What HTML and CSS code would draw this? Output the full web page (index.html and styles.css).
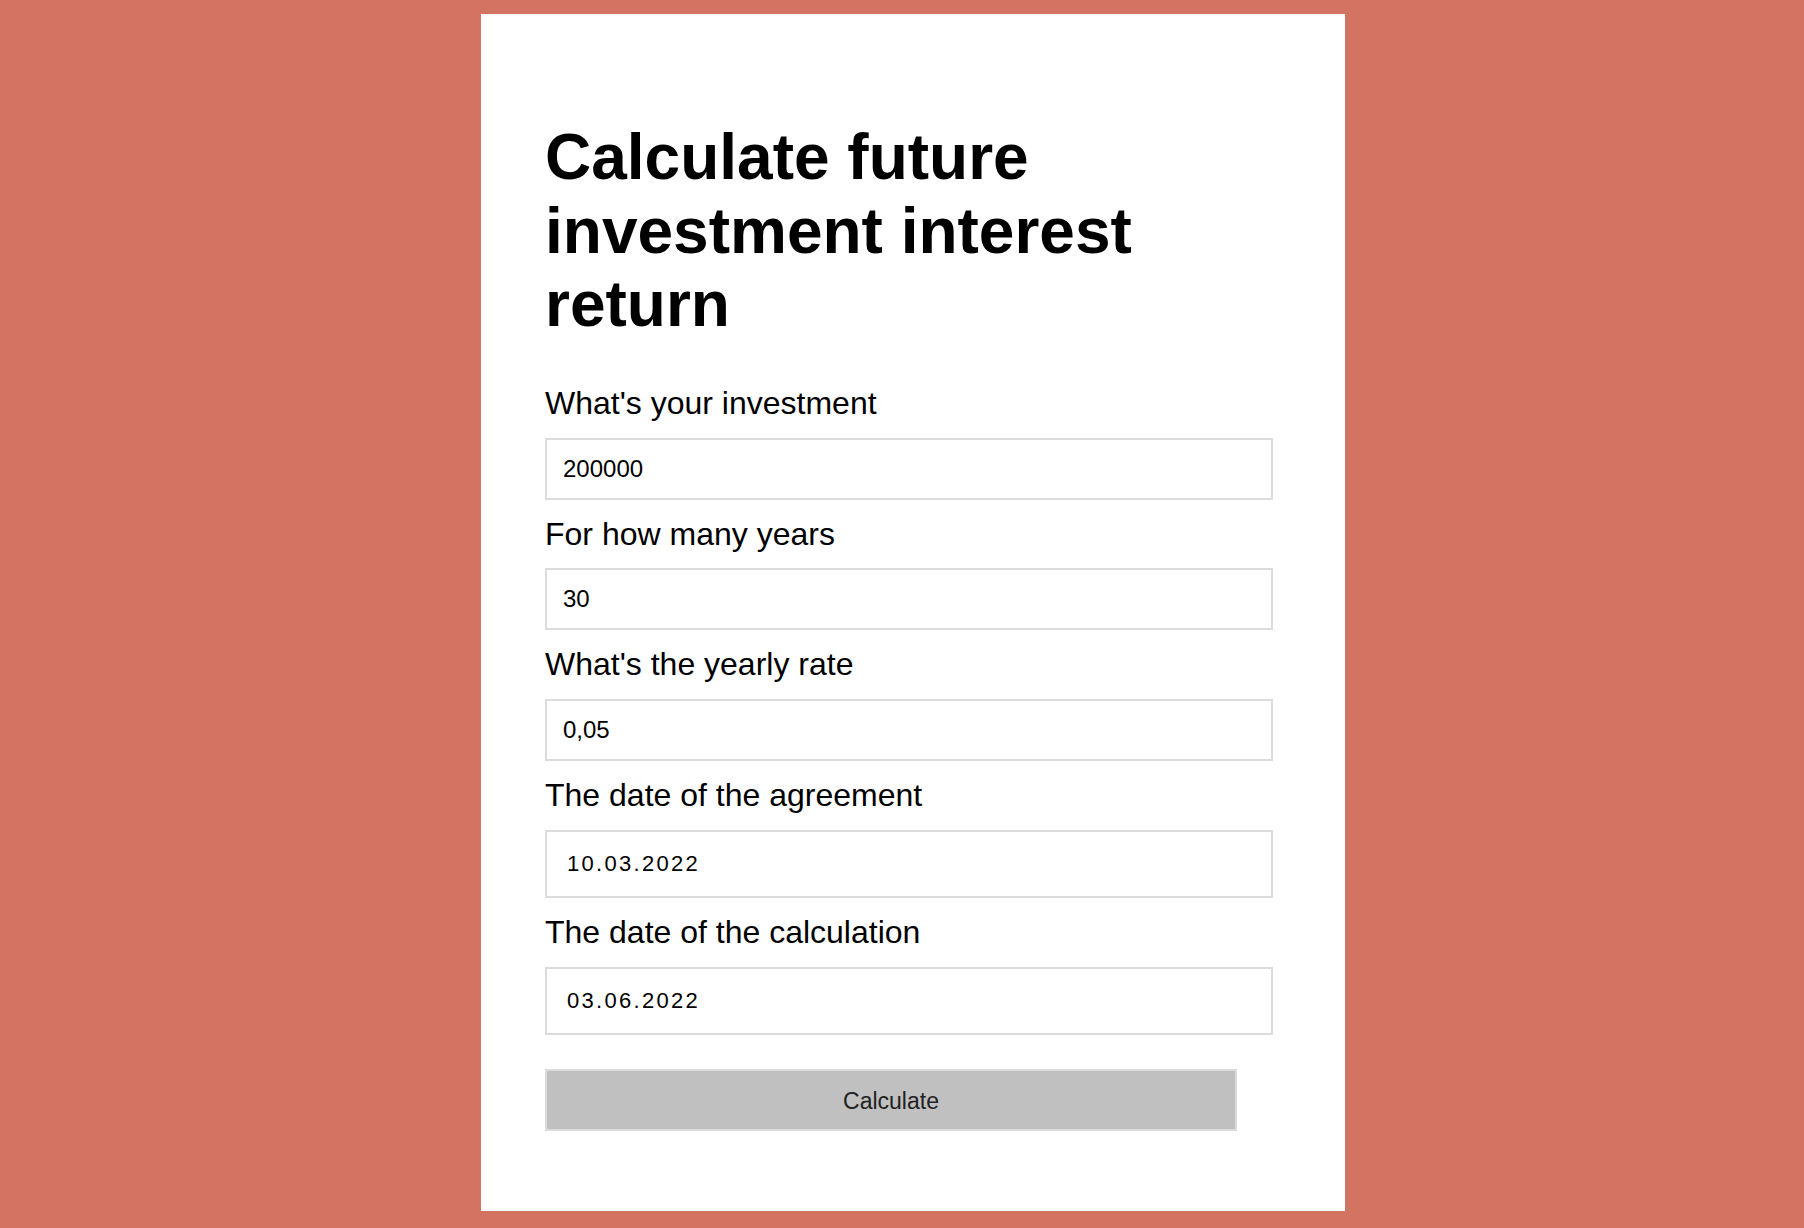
FILE: index.html
```html
<!DOCTYPE html>
<html lang="en">
<head>
<meta charset="utf-8">
<title>Calculate future investment interest return</title>
<link rel="stylesheet" href="styles.css">
</head>
<body>
  <main class="card">
    <h1 class="title">Calculate future investment interest return</h1>
    <form class="form">
      <label class="label" for="investment">What's your investment</label>
      <input class="field" id="investment" type="text" value="200000">
      <label class="label" for="years">For how many years</label>
      <input class="field" id="years" type="text" value="30">
      <label class="label" for="rate">What's the yearly rate</label>
      <input class="field" id="rate" type="text" value="0,05">
      <label class="label" for="agreement">The date of the agreement</label>
      <input class="field field-date" id="agreement" type="text" value="10.03.2022">
      <label class="label" for="calc">The date of the calculation</label>
      <input class="field field-date" id="calc" type="text" value="03.06.2022">
      <button class="button" type="button">Calculate</button>
    </form>
  </main>
</body>
</html>
```

FILE: styles.css
```css
html, body {
  height: 100%;
}

body {
  margin: 0;
  background: #d37463;
  display: flex;
  justify-content: center;
  align-items: flex-start;
  padding: 14px 0 0 22px;
  box-sizing: border-box;
  font-family: "Liberation Sans", Arial, Helvetica, sans-serif;
  color: #000;
}

.card {
  width: 864px;
  box-sizing: border-box;
  background: #fff;
  padding: 64px;
}

.title {
  font-size: 64px;
  font-weight: 700;
  line-height: 73.6px;
  margin: 43px 0 43px;
}

.form {
  display: flex;
  flex-direction: column;
  align-items: flex-start;
}

.label {
  font-size: 32px;
  line-height: 36.8px;
  margin: 0 0 16px;
}

.field {
  width: 728px;
  height: 62px;
  box-sizing: border-box;
  border: 2px solid #dcdcdc;
  padding: 0 16px;
  margin: 0 0 16px;
  font-family: "Liberation Sans", Arial, sans-serif;
  font-size: 24px;
  color: #000;
  background: #fff;
  outline: none;
}

.field-date {
  height: 68px;
  padding: 0 20px;
  font-size: 22px;
  letter-spacing: 2.3px;
}

.button {
  width: 692px;
  height: 62px;
  margin: 18px 0 16px;
  border: 2px solid #dcdcdc;
  background: #c0c0c0;
  font-family: "Liberation Sans", Arial, sans-serif;
  font-size: 23px;
  color: #222;
  padding: 4px 0 0;
}
```
